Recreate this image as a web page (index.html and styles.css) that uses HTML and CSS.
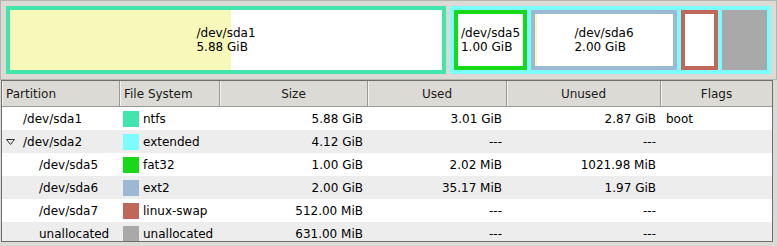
FILE: index.html
```html
<!DOCTYPE html>
<html lang="en">
<head>
  <meta charset="UTF-8">
  <meta name="viewport" content="width=device-width, initial-scale=1.0">
  <link rel="stylesheet" href="styles.css">
</head>
<body>

  <div class="map">
    <div class="part ntfs sda1">
      <div class="label">/dev/sda1<br>5.88 GiB</div>
    </div>
    <div class="extended">
      <div class="part fat32 sda5">
        <div class="label">/dev/sda5<br>1.00 GiB</div>
      </div>
      <div class="part ext2 sda6">
        <div class="label">/dev/sda6<br>2.00 GiB</div>
      </div>
      <div class="part swap sda7"></div>
      <div class="unalloc"></div>
    </div>
  </div>

  <div class="tree">
    <div class="head">
      <div class="hcell left">Partition</div>
      <div class="hcell left">File System</div>
      <div class="hcell">Size</div>
      <div class="hcell">Used</div>
      <div class="hcell">Unused</div>
      <div class="hcell last">Flags</div>
    </div>

    <div class="row">
      <div class="cell name">/dev/sda1</div>
      <div class="cell fs"><span class="swatch c-ntfs"></span>ntfs</div>
      <div class="cell num">5.88 GiB</div>
      <div class="cell num">3.01 GiB</div>
      <div class="cell num">2.87 GiB</div>
      <div class="cell flags">boot</div>
    </div>

    <div class="row alt">
      <div class="cell name">
        <svg class="expander" width="9" height="7" viewBox="0 0 9 7"><polygon points="0.5,0.5 8.5,0.5 4.5,5.5" fill="none" stroke="#2e2e2e" stroke-width="1"/></svg>/dev/sda2
      </div>
      <div class="cell fs"><span class="swatch c-ext"></span>extended</div>
      <div class="cell num">4.12 GiB</div>
      <div class="cell num">---</div>
      <div class="cell num">---</div>
      <div class="cell flags"></div>
    </div>

    <div class="row">
      <div class="cell name child">/dev/sda5</div>
      <div class="cell fs"><span class="swatch c-fat"></span>fat32</div>
      <div class="cell num">1.00 GiB</div>
      <div class="cell num">2.02 MiB</div>
      <div class="cell num">1021.98 MiB</div>
      <div class="cell flags"></div>
    </div>

    <div class="row alt">
      <div class="cell name child">/dev/sda6</div>
      <div class="cell fs"><span class="swatch c-ext2"></span>ext2</div>
      <div class="cell num">2.00 GiB</div>
      <div class="cell num">35.17 MiB</div>
      <div class="cell num">1.97 GiB</div>
      <div class="cell flags"></div>
    </div>

    <div class="row">
      <div class="cell name child">/dev/sda7</div>
      <div class="cell fs"><span class="swatch c-swap"></span>linux-swap</div>
      <div class="cell num">512.00 MiB</div>
      <div class="cell num">---</div>
      <div class="cell num">---</div>
      <div class="cell flags"></div>
    </div>

    <div class="row alt">
      <div class="cell name child">unallocated</div>
      <div class="cell fs"><span class="swatch c-unalloc"></span>unallocated</div>
      <div class="cell num">631.00 MiB</div>
      <div class="cell num">---</div>
      <div class="cell num">---</div>
      <div class="cell flags"></div>
    </div>
  </div>

</body>
</html>
```

FILE: styles.css
```css
body {
  margin: 0;
  width: 777px;
  height: 246px;
  overflow: hidden;
  background-color: #dcdad5;
  font-family: "DejaVu Sans", sans-serif;
  font-size: 12px;
  color: #000;
}

/* disk map */
.map {
  box-sizing: border-box;
  height: 80px;
  border: 1px solid #b6b4af;
  padding: 5px;
  display: flex;
  gap: 4px;
}

.part {
  box-sizing: border-box;
  height: 68px;
  border: 4px solid;
  background-color: #fff;
  display: flex;
  justify-content: center;
  align-items: center;
  overflow: hidden;
}

.label {
  line-height: 14px;
  white-space: nowrap;
}

.sda1 {
  width: 440px;
  border-color: #42e5ac;
  background: linear-gradient(to right, #f8f8ba 221px, #fff 221px);
}

.extended {
  box-sizing: border-box;
  width: 321px;
  height: 68px;
  border: 4px solid #7dfcfe;
  background-color: #7dfcfe;
  display: flex;
  gap: 4px;
}

.extended .part,
.extended .unalloc {
  height: 60px;
}

.sda5 {
  width: 73px;
  border-color: #18d918;
}

.sda6 {
  width: 146px;
  border-color: #9db8d2;
  background: linear-gradient(to right, #f8f8ba 2px, #fff 2px);
}

.sda7 {
  width: 37px;
  border-color: #c1665a;
}

.unalloc {
  width: 45px;
  background-color: #a9a9a9;
}

/* partition list */
.tree {
  box-sizing: border-box;
  width: 772px;
  height: 162px;
  margin-left: 1px;
  border: 1px solid #6f6e6b;
  background-color: #fff;
  overflow: hidden;
}

.head,
.row {
  display: grid;
  grid-template-columns: 118px 100px 148px 139px 154px 1fr;
}

.head {
  height: 26px;
  background-color: #dcdad5;
  border-bottom: 1px solid #9a9893;
  box-sizing: border-box;
}

.hcell {
  display: flex;
  align-items: center;
  justify-content: center;
  border-right: 1px solid #9a9893;
  box-shadow: inset 1px 0 #f4f3f1;
  color: #1a1a1a;
}

.hcell.left {
  justify-content: flex-start;
  padding-left: 4px;
}

.hcell.last {
  border-right: none;
}

.row {
  height: 23px;
}

.row.alt {
  background-color: #ededed;
}

.cell {
  display: flex;
  align-items: center;
  white-space: nowrap;
}

.name {
  padding-left: 21px;
  position: relative;
}

.name.child {
  padding-left: 37px;
}

.expander {
  position: absolute;
  left: 4px;
  top: 9px;
}

.fs {
  padding-left: 3px;
}

.swatch {
  width: 16px;
  height: 16px;
  margin-right: 4px;
}

.c-ntfs { background-color: #42e5ac; }
.c-ext { background-color: #7dfcfe; }
.c-fat { background-color: #18d918; }
.c-ext2 { background-color: #9db8d2; }
.c-swap { background-color: #c1665a; }
.c-unalloc { background-color: #a9a9a9; }

.num {
  justify-content: flex-end;
  padding-right: 5px;
}

.flags {
  padding-left: 5px;
}
```
